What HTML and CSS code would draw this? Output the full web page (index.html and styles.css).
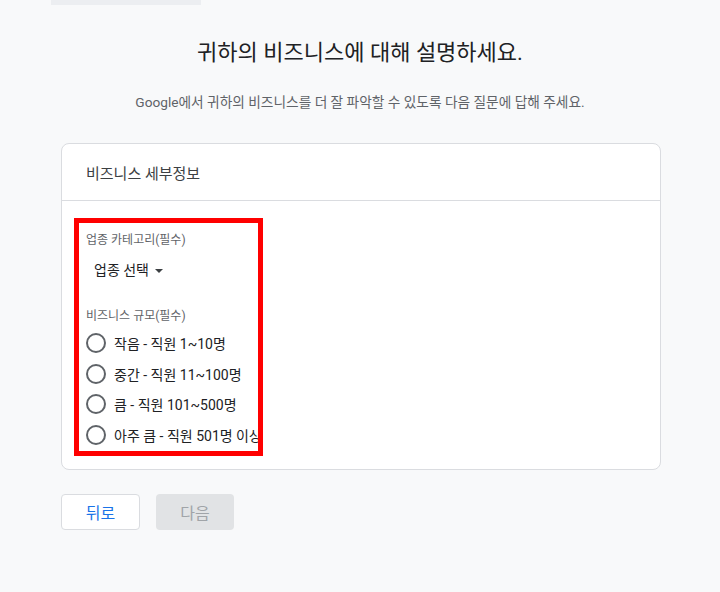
FILE: index.html
```html
<!DOCTYPE html>
<html lang="ko">
<head>
<meta charset="utf-8">
<link rel="stylesheet" href="styles.css">
</head>
<body>
<div class="topbar"></div>
<h1 class="title">귀하의 비즈니스에 대해 설명하세요.</h1>
<p class="subtitle">Google에서 귀하의 비즈니스를 더 잘 파악할 수 있도록 다음 질문에 답해 주세요.</p>
<div class="card">
  <div class="card-header">비즈니스 세부정보</div>
  <div class="card-body">
    <div class="field-label">업종 카테고리(필수)</div>
    <div class="dropdown">업종 선택 <span class="caret"></span></div>
    <div class="field-label second">비즈니스 규모(필수)</div>
    <div class="radios">
      <div class="radio-row"><span class="radio"></span><span>작음 - 직원 1~10명</span></div>
      <div class="radio-row"><span class="radio"></span><span>중간 - 직원 11~100명</span></div>
      <div class="radio-row"><span class="radio"></span><span>큼 - 직원 101~500명</span></div>
      <div class="radio-row"><span class="radio"></span><span>아주 큼 - 직원 501명 이상</span></div>
    </div>
    <div class="highlight"></div>
  </div>
</div>
<div class="actions">
  <button class="btn back">뒤로</button>
  <button class="btn next" disabled>다음</button>
</div>
</body>
</html>
```
FILE: styles.css
```css
html, body {
  margin: 0;
  padding: 0;
}
body {
  background: #f8f9fa;
  font-family: Roboto, "Noto Sans CJK KR", sans-serif;
  color: #202124;
  width: 720px;
  height: 592px;
  overflow: hidden;
}
.topbar {
  margin-left: 51px;
  width: 150px;
  height: 5px;
  background: #eceef1;
}
.title {
  margin: 34px 0 0;
  text-align: center;
  font-size: 22px;
  line-height: 28px;
  font-weight: 400;
  color: #202124;
}
.subtitle {
  margin: 25px 0 0;
  text-align: center;
  font-size: 13.7px;
  line-height: 20px;
  color: #5f6368;
}
.card {
  margin: 31px 0 0 61px;
  width: 598px;
  height: 325px;
  background: #fff;
  border: 1px solid #dadce0;
  border-radius: 8px;
}
.card-header {
  height: 56px;
  border-bottom: 1px solid #dadce0;
  padding-left: 24px;
  display: flex;
  align-items: center;
  font-size: 15px;
  color: #3c4043;
}
.card-body {
  position: relative;
  padding: 31px 0 0 24px;
}
.field-label {
  font-size: 12px;
  line-height: 16px;
  color: #5f6368;
}
.field-label.second {
  margin-top: 28px;
}
.dropdown {
  margin-top: 12px;
  padding-left: 8px;
  font-size: 14px;
  line-height: 20px;
  color: #202124;
  display: flex;
  align-items: center;
  gap: 6px;
}
.caret {
  width: 0;
  height: 0;
  border-left: 4px solid transparent;
  border-right: 4px solid transparent;
  border-top: 4px solid #3c4043;
  margin-top: 2px;
}
.radios {
  margin-top: 4px;
}
.radio-row {
  height: 30.5px;
  display: flex;
  align-items: center;
  gap: 8px;
  font-size: 14px;
  color: #202124;
  white-space: nowrap;
}
.radio {
  width: 16px;
  height: 16px;
  border: 2px solid #5f6368;
  border-radius: 50%;
  flex: none;
}
.highlight {
  position: absolute;
  left: 12px;
  top: 17px;
  width: 179px;
  height: 228px;
  border: 5px solid #ff0000;
}
.actions {
  margin: 24px 0 0 61px;
  display: flex;
  gap: 16px;
}
.btn {
  width: 79px;
  height: 36px;
  border-radius: 4px;
  font-family: "Noto Sans CJK KR", Roboto, sans-serif;
  font-size: 16px;
  padding: 0;
}
.btn.back {
  background: #fff;
  border: 1px solid #dadce0;
  color: #1a73e8;
}
.btn.next {
  width: 78px;
  background: #e1e3e5;
  border: none;
  color: #a0a4a8;
}
```
